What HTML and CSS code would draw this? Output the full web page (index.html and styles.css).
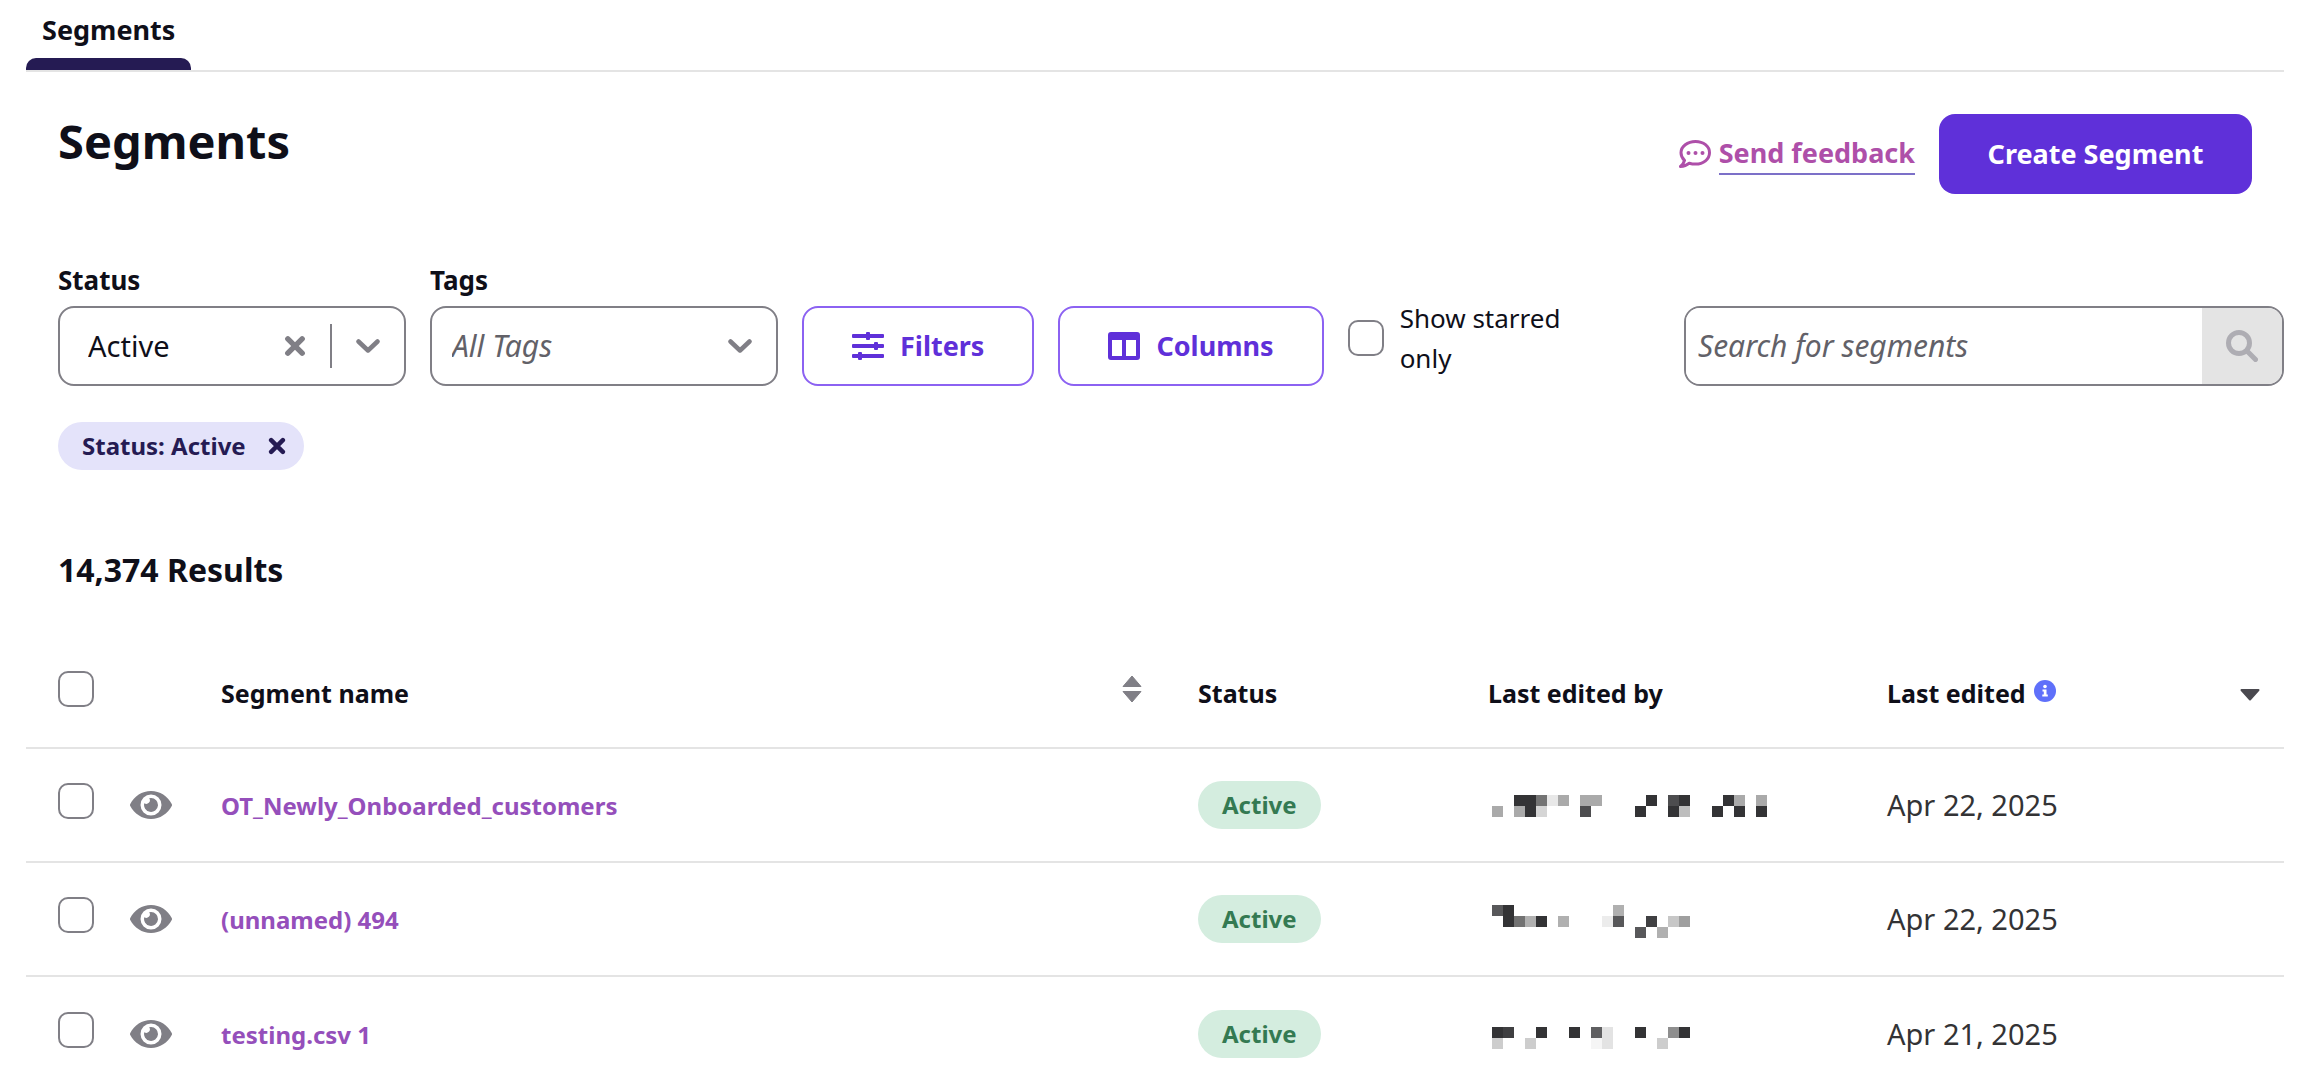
FILE: index.html
```html
<!DOCTYPE html>
<html lang="en">
<head>
<meta charset="utf-8">
<title>Segments</title>
<link rel="stylesheet" href="styles.css">
</head>
<body>
<svg class="defs" width="0" height="0" aria-hidden="true">
  <symbol id="eye" viewBox="0 64 576 384"><path d="M572.52 241.4C518.29 135.59 410.93 64 288 64S57.68 135.64 3.48 241.41a32.35 32.35 0 0 0 0 29.19C57.71 376.41 165.07 448 288 448s230.32-71.64 284.52-177.41a32.35 32.35 0 0 0 0-29.19zM288 400a144 144 0 1 1 144-144 143.93 143.93 0 0 1-144 144zm0-240a95.31 95.31 0 0 0-25.31 3.79 47.85 47.85 0 0 1-66.9 66.9A95.78 95.78 0 1 0 288 160z"/></symbol>
  <symbol id="chevron" viewBox="0 0 24 16"><path d="M2.500 3.500l9.500 9 9.500-9" fill="none" stroke="currentColor" stroke-width="4.500" stroke-linecap="round" stroke-linejoin="round"/></symbol>
  <symbol id="cross" viewBox="0 0 20 20"><path d="M3.500 3.500l13 13M16.500 3.500l-13 13" fill="none" stroke="currentColor" stroke-width="5" stroke-linecap="round"/></symbol>
</svg>
<main class="page">
  <nav class="tabs"><a class="tab" href="#segments">Segments</a></nav>

  <header class="header" id="segments">
    <h1 class="title">Segments</h1>
    <div class="header-actions">
      <a class="feedback" href="#feedback">
        <svg class="feedback-icon" viewBox="0 0 32 28" aria-hidden="true"><path d="M16.500 1.500C8.500 1.500 2 6.300 2 12.700c0 3 1.300 5.600 3.500 7.700C5 22.800 3.500 24.900 1.500 26.500c3.500 0 6.500-1.300 8.800-3.300 2 .6 4 .9 6.200.9 8 0 14-5 14-11.400S24.500 1.500 16.500 1.500z" fill="none" stroke="currentColor" stroke-width="3" stroke-linejoin="round"/><circle cx="9.500" cy="13" r="2"/><circle cx="16.500" cy="13" r="2"/><circle cx="23.500" cy="13" r="2"/></svg>
        <span class="feedback-text">Send feedback</span>
      </a>
      <button class="create" type="button">Create Segment</button>
    </div>
  </header>

  <section class="toolbar" aria-label="Filters">
    <div class="field">
      <label class="label" for="status">Status</label>
      <div class="select-box">
        <select class="select" id="status"><option>Active</option></select>
        <button class="clear" type="button" aria-label="Clear status"><svg class="cross" aria-hidden="true"><use href="#cross"/></svg></button>
        <span class="divider"></span>
        <svg class="chevron" aria-hidden="true"><use href="#chevron"/></svg>
      </div>
    </div>
    <div class="field">
      <label class="label" for="tags">Tags</label>
      <div class="select-box">
        <select class="select select-empty" id="tags"><option>All Tags</option></select>
        <svg class="chevron" aria-hidden="true"><use href="#chevron"/></svg>
      </div>
    </div>
    <button class="outline" type="button">
      <svg class="outline-icon" viewBox="0 0 32 28" aria-hidden="true"><rect x="0" y="2" width="32" height="4" rx="1"/><rect x="0" y="12" width="32" height="4" rx="1"/><rect x="0" y="22" width="32" height="4" rx="1"/><rect x="14" y="0" width="4" height="8" rx="1"/><rect x="22" y="10" width="4" height="8" rx="1"/><rect x="6" y="20" width="4" height="8" rx="1"/></svg>
      Filters
    </button>
    <button class="outline" type="button">
      <svg class="outline-icon" viewBox="0 0 32 28" aria-hidden="true"><path fill-rule="evenodd" d="M3 0h26a3 3 0 0 1 3 3v22a3 3 0 0 1-3 3H3a3 3 0 0 1-3-3V3a3 3 0 0 1 3-3zM4 8v16h10V8zM18 8v16h10V8z"/></svg>
      Columns
    </button>
    <label class="starred"><input class="check" type="checkbox"><span>Show starred only</span></label>
    <form class="search" role="search">
      <input class="search-input" type="search" placeholder="Search for segments" aria-label="Search for segments">
      <button class="search-button" type="button" aria-label="Search"><svg class="search-icon" viewBox="0 0 32 32" aria-hidden="true"><circle cx="13" cy="13" r="10.500" fill="none" stroke="currentColor" stroke-width="5"/><path d="M21.500 21.500l8 8" stroke="currentColor" stroke-width="5" stroke-linecap="round"/></svg></button>
    </form>
  </section>

  <div class="chips"><span class="chip">Status: Active<button class="chip-clear" type="button" aria-label="Remove status filter"><svg class="chip-cross" aria-hidden="true"><use href="#cross"/></svg></button></span></div>

  <h2 class="results">14,374 Results</h2>

  <table class="table">
    <colgroup><col class="col-check"><col class="col-eye"><col class="col-name"><col class="col-status"><col class="col-by"><col class="col-date"></colgroup>
    <thead>
      <tr>
        <th class="cell-check"><input class="check" type="checkbox" aria-label="Select all"></th>
        <th></th>
        <th><div class="sort-head">Segment name<svg class="sort" viewBox="0 0 20 28" aria-hidden="true"><path d="M10 1L19 11.500H1zM10 27L19 16.500H1z" stroke="currentColor" stroke-linejoin="round"/></svg></div></th>
        <th>Status</th>
        <th>Last edited by</th>
        <th><div class="date-head">Last edited<svg class="info" viewBox="0 0 22 22" aria-hidden="true"><circle cx="11" cy="11" r="11"/><circle cx="11" cy="6.500" r="1.800" fill="#fff"/><path d="M8.500 9.500h4v5h1.300v2H8.300v-2h1.500v-3H8.500z" fill="#fff"/></svg><svg class="caret" viewBox="0 0 20 12" aria-hidden="true"><path d="M1.500 1h17L10 10.500z" stroke="currentColor" stroke-width="2" stroke-linejoin="round"/></svg></div></th>
      </tr>
    </thead>
    <tbody>
      <tr>
        <td class="cell-check"><input class="check" type="checkbox" aria-label="Select OT_Newly_Onboarded_customers"></td>
        <td><svg class="eye" aria-hidden="true"><use href="#eye"/></svg></td>
        <td><a class="name" href="#1">OT_Newly_Onboarded_customers</a></td>
        <td><span class="badge">Active</span></td>
        <td><svg class="mosaic" viewBox="0 -1 275 44" shape-rendering="crispEdges" aria-hidden="true"><g transform="scale(11)"><path fill="#333335" d="M2 1h2v1H2zM3 2h1v1H3zM14 1h1v1h-1zM13 2h1v1h-1zM17 1h1v1h-1zM21 1h1v1h-1zM20 2h1v1h-1zM22 2h1v1h-1zM24 2h1v1h-1zM16 2h1v1h-1z"/><path fill="#4d4d4f" d="M8 2h1v1H8zM16 1h1v1h-1z"/><path fill="#747474" d="M4 1h1v1H4z"/><path fill="#aaa" d="M0 2h1v1H0zM2 2h1v1H2zM6 1h1v1H6zM8 1h2v1H8zM22 1h1v1h-1zM24 1h1v1h-1z"/><path fill="#bdbdbd" d="M17 2h1v1h-1z"/><path fill="#d5d5d5" d="M4 2h1v1H4z"/><path fill="#e8e8e8" d="M5 1h1v1H5z"/></g></svg></td>
        <td>Apr 22, 2025</td>
      </tr>
      <tr>
        <td class="cell-check"><input class="check" type="checkbox" aria-label="Select (unnamed) 494"></td>
        <td><svg class="eye" aria-hidden="true"><use href="#eye"/></svg></td>
        <td><a class="name" href="#2">(unnamed) 494</a></td>
        <td><span class="badge">Active</span></td>
        <td><svg class="mosaic" viewBox="0 -8 275 44" shape-rendering="crispEdges" aria-hidden="true"><g transform="scale(11)"><path fill="#333335" d="M1 0h1v2H1zM4 1h1v1H4z"/><path fill="#404042" d="M14 1h1v1h-1z"/><path fill="#58585a" d="M0 0h1v1H0zM11 1h1v1h-1zM13 2h1v1h-1z"/><path fill="#727272" d="M2 1h1v1H2z"/><path fill="#b0b0b0" d="M3 1h1v1H3zM6 1h1v1H6zM11 0h1v1h-1zM15 2h1v1h-1z"/><path fill="#9f9f9f" d="M17 1h1v1h-1z"/><path fill="#c7c7c7" d="M16 1h1v1h-1z"/><path fill="#ececec" d="M10 1h1v1h-1z"/></g></svg></td>
        <td>Apr 22, 2025</td>
      </tr>
      <tr>
        <td class="cell-check"><input class="check" type="checkbox" aria-label="Select testing.csv 1"></td>
        <td><svg class="eye" aria-hidden="true"><use href="#eye"/></svg></td>
        <td><a class="name" href="#3">testing.csv 1</a></td>
        <td><span class="badge">Active</span></td>
        <td><svg class="mosaic" viewBox="0 -4 275 44" shape-rendering="crispEdges" aria-hidden="true"><g transform="scale(11)"><path fill="#333335" d="M0 1h1v1H0zM4 1h1v1H4zM7 1h1v1H7zM13 1h1v1h-1zM17 1h1v1h-1z"/><path fill="#3f3f41" d="M1 1h1v1H1z"/><path fill="#5f5f61" d="M9 1h1v1H9z"/><path fill="#8e8e8e" d="M16 1h1v1h-1z"/><path fill="#cdcdcd" d="M0 2h1v1H0zM3 2h1v1H3zM15 2h1v1h-1z"/><path fill="#e3e3e3" d="M10 1h1v2h-1z"/><path fill="#f5f5f5" d="M9 2h1v1H9z"/></g></svg></td>
        <td>Apr 21, 2025</td>
      </tr>
    </tbody>
  </table>
</main>
</body>
</html>
```

FILE: styles.css
```css
* { box-sizing: border-box; }
body { margin: 0; background: #fff; color: #0f0f19; font: 26px/40px "Noto Sans", sans-serif; }
button, input, select { font: inherit; color: inherit; margin: 0; }
svg { display: block; flex: none; fill: currentColor; }
.defs { position: absolute; }
.page { padding: 0 32px 0 26px; }

.tabs { display: flex; border-bottom: 2px solid #e4e4e4; }
.tab { display: flex; flex-direction: column; justify-content: space-between; height: 70px; padding: 10px 16px 0; color: inherit; font-size: 27px; font-weight: 700; text-decoration: none; }
.tab::after { content: ""; height: 12px; margin: 0 -16px; background: #251b53; border-radius: 10px 10px 0 0; }

.header { display: flex; justify-content: space-between; align-items: flex-start; padding: 42px 32px 0; }
.title { margin: 0; font-size: 47px; line-height: 54px; }
.header-actions { display: flex; align-items: center; gap: 24px; }
.feedback { display: flex; align-items: center; gap: 8px; color: #ae4fa9; font-weight: 700; font-size: 27px; text-decoration: none; }
.feedback-icon { width: 32px; height: 28px; }
.feedback-text { border-bottom: 2px solid #7c70c8; }
.create { width: 313px; height: 80px; border: 0; border-radius: 16px; background: #5f30d9; color: #fff; font-weight: 700; font-size: 27px; }

.toolbar { display: flex; align-items: flex-end; gap: 24px; padding: 68px 0 0 32px; }
.field { width: 348px; }
.label { display: block; font-weight: 700; line-height: 36px; padding-bottom: 8px; }
.select-box { display: flex; align-items: center; height: 80px; padding-right: 24px; border: 2px solid #807f86; border-radius: 16px; color: #807f86; }
.select { flex: 1; min-width: 0; height: 100%; padding: 0 0 0 28px; border: 0; background: none; appearance: none; color: #0f0f19; font-size: 29px; }
.select-empty { padding-left: 20px; color: #626168; font-size: 30px; font-style: italic; }
.clear, .chip-clear { padding: 0; border: 0; background: none; color: inherit; }
.cross { width: 22px; height: 22px; }
.divider { width: 2px; height: 44px; margin: 0 24px; background: #807f86; }
.chevron { width: 24px; height: 16px; }
.outline { display: flex; align-items: center; gap: 16px; height: 80px; padding: 0 48px; border: 2px solid #8c62f2; border-radius: 16px; background: #fff; color: #5f30d9; font-weight: 700; font-size: 27px; }
.outline-icon { width: 32px; height: 28px; }
.starred { display: flex; align-items: center; gap: 16px; width: 224px; padding-bottom: 8px; }
.check { appearance: none; flex: none; width: 36px; height: 36px; border: 2px solid #807f86; border-radius: 10px; background: #fff; display: block; }
.search { display: flex; width: 600px; height: 80px; margin-left: auto; border: 2px solid #807f86; border-radius: 16px; overflow: hidden; }
.search-input { flex: 1; min-width: 0; padding: 0 12px; border: 0; appearance: none; font-size: 30px; }
.search-input::placeholder { color: #626168; font-style: italic; opacity: 1; }
.search-button { display: grid; place-items: center; width: 80px; padding: 0; border: 0; background: #e4e4e4; color: #aeadb3; }
.search-icon { width: 32px; height: 32px; }

.chips { padding: 36px 32px 0; display: flex; }
.chip { display: flex; align-items: center; gap: 22px; height: 48px; padding: 0 18px 0 24px; border-radius: 24px; background: #e4e3fa; color: #251b53; font-weight: 700; font-size: 24px; }
.chip-cross { width: 18px; height: 18px; }

.results { margin: 80px 32px 48px; font-size: 32px; line-height: 40px; }

.table { width: 100%; table-layout: fixed; border-collapse: collapse; }
.table th, .table td { padding: 0; height: 114px; border-bottom: 2px solid #e4e4e4; text-align: left; vertical-align: middle; }
.table th { height: 110px; font-weight: 700; font-size: 25px; }
.table tr:last-child td { border-bottom: 0; }
.table thead tr:last-child th { border-bottom: 2px solid #e4e4e4; }
.table td { color: #333335; font-size: 29px; }
.table .cell-check { padding: 0 0 8px 32px; }
.col-check { width: 104px; }
.col-eye { width: 91px; }
.col-status { width: 290px; }
.col-by { width: 399px; }
.col-date { width: 397px; }
.sort-head { display: flex; justify-content: space-between; align-items: center; padding-right: 56px; }
.sort { width: 20px; height: 28px; margin-bottom: 8px; color: #807f86; }
.date-head { display: flex; align-items: center; gap: 8px; padding-right: 24px; }
.info { width: 22px; height: 22px; margin-bottom: 4px; color: #5f70fa; }
.caret { width: 20px; height: 12px; margin: 4px 0 0 auto; color: #4a494f; }
.eye { width: 42px; height: 28px; color: #807f86; }
.name { color: #954fbb; font-weight: 700; font-size: 24px; text-decoration: none; }
.badge { display: inline-block; padding: 0 24px; border-radius: 24px; background: #d4eddf; color: #347a52; font-weight: 700; font-size: 24px; line-height: 48px; }
.mosaic { width: 275px; height: 44px; margin-left: 4px; }
```
